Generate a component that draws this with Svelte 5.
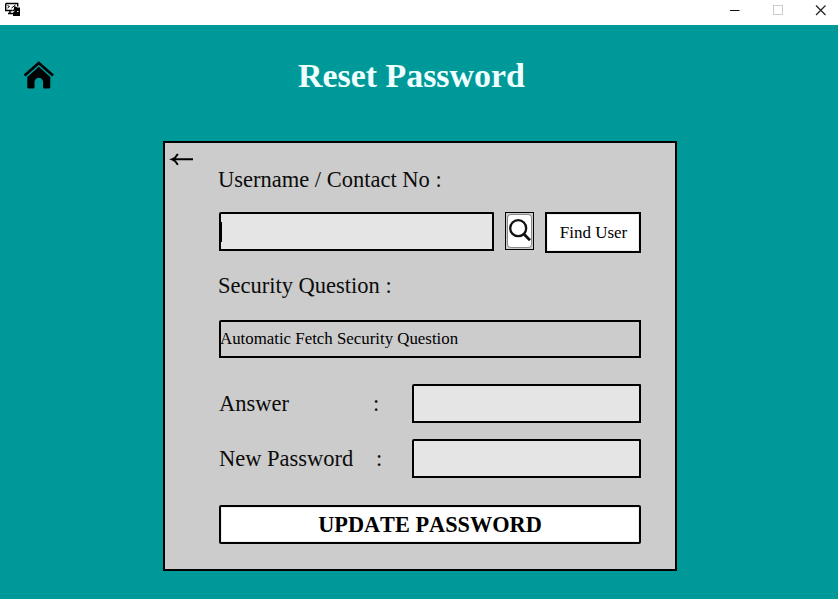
<script>
  let username = $state('');
  let answer = $state('');
  let password = $state('');
</script>

<div class="window">
  <header class="titlebar">
    <svg class="app-icon" width="16" height="16" viewBox="0 0 16 16" aria-hidden="true">
      <path d="M.7 1.500h12v3M.7 1.500v7h7M3 11.500h5M5 8.500v3" fill="none" stroke="#000" stroke-width="1.400" />
      <path d="M2.500 3.500l2 1-2 1.500M10.500 3l-4 3" fill="none" stroke="#000" stroke-width="1" />
      <path d="M9 4.500h2l1 1h3V14H8V7.500h1z" fill="#000" />
      <path d="M7.500 10.500l2-1.500M12 9.500h1.500" stroke="#fff" stroke-width="1" />
    </svg>
    <div class="controls">
      <svg width="11" height="11" viewBox="0 0 11 11"><path d="M1 5.500h9.500" stroke="#111" stroke-width="1" /></svg>
      <svg width="11" height="11" viewBox="0 0 11 11"><rect x="1.500" y=".5" width="9" height="9" fill="none" stroke="#ccc" /></svg>
      <svg width="11" height="11" viewBox="0 0 11 11"><path d="M1 .5l9.500 9.500M10.500 .5l-9.500 9.500" stroke="#222" stroke-width="1.200" /></svg>
    </div>
  </header>

  <div class="heading">
    <svg class="home" width="32" height="30" viewBox="0 0 32 30" aria-label="Home">
      <path d="M1.600 14.400L15.800 2.100l14.200 12.300" fill="none" stroke="#000" stroke-width="2.700" />
      <path d="M15.800 5.800L4.300 16V26q0 1.500 1.500 1.500h4.500q1.200 0 1.200-1.200v-5a4.300 4.500 0 0 1 8.600 0v5q0 1.200 1.200 1.200h4.500q1.500 0 1.500-1.500V16z" fill="#000" />
    </svg>
    <h1>Reset Password</h1>
  </div>

  <main class="panel">
    <svg class="back" width="26" height="16" viewBox="0 0 26 16" aria-label="Back">
      <path d="M24 8.300H3.500M8.800 2.800Q6.700 7 3 8.300q3.700 1.300 5.800 5.500" fill="none" stroke="#000" stroke-width="1.900" />
    </svg>
    <label class="label user-label" for="user">Username / Contact No :</label>
    <div class="lookup">
      <div class="field user"><span class="caret"></span><input id="user" bind:value={username} /></div>
      <button class="search" aria-label="Search">
        <svg width="25" height="34" viewBox="0 0 25 34">
          <circle cx="11.200" cy="14.200" r="8" fill="none" stroke="#111" stroke-width="2.300" />
          <path d="M16.800 20l6.200 6.200" stroke="#111" stroke-width="2.700" />
        </svg>
      </button>
      <button class="find">Find User</button>
    </div>
    <div class="label question-label">Security Question :</div>
    <div class="question"><span>Automatic Fetch Security Question</span></div>
    <div class="row answer">
      <label class="label" for="answer">Answer</label><span class="label colon">:</span>
      <div class="field"><input id="answer" bind:value={answer} /></div>
    </div>
    <div class="row password">
      <label class="label" for="password">New Password</label><span class="label colon">:</span>
      <div class="field"><input id="password" type="password" bind:value={password} /></div>
    </div>
    <button class="update">UPDATE PASSWORD</button>
  </main>
</div>

<style>
  :global(body) { margin: 0; overflow: hidden; }
  .window, .window * { box-sizing: border-box; }
  .window {
    width: 838px; height: 599px; background: #099; color: #000;
    font-family: "Liberation Serif", "Times New Roman", serif;
    font-kerning: none; display: flex; flex-direction: column;
  }
  svg { display: block; flex: none; }
  .titlebar {
    height: 25px; background: #fff; display: flex; flex: none;
    justify-content: space-between; align-items: flex-start; padding: 2px 12px 0 5px;
  }
  .controls { display: flex; gap: 32px; padding-top: 3px; }
  .heading { height: 116px; display: flex; padding: 35px 0 0 23px; flex: none; }
  .home { margin-top: 1px; }
  h1 { margin: -4px 0 0 243px; font-size: 33.900px; line-height: 40px; font-weight: bold; color: #f0ffff; white-space: nowrap; }
  .panel {
    width: 514px; height: 430px; margin-left: 163px; flex: none;
    background: #ccc; border: 2px solid #000; padding: 8px 34px 0 54px;
    display: flex; flex-direction: column;
  }
  .back { margin-left: -50px; }
  .label { font-size: 22.500px; line-height: 26px; color: #0b0b0b; white-space: pre; }
  .user-label, .question-label { margin-left: -1px; }
  .lookup { display: flex; margin-top: 19px; height: 41px; align-items: flex-start; }
  .field { height: 39px; border: 2px solid #000; border-radius: 2px 1px 0 0; background: #e5e5e5; display: flex; align-items: center; }
  .field input { width: 100%; min-width: 0; border: 0; outline: 0; background: none; padding: 0 2px; font: inherit; font-size: 17px; }
  .user { width: 275px; }
  .caret { width: 1px; height: 20px; background: #000; flex: none; }
  button { font-family: inherit; font-kerning: none; color: #000; padding: 0; background: #fff; }
  .search { width: 29px; height: 38px; margin-left: 11px; border: 1px solid #000; background: #ccc; display: flex; padding: 1px; }
  .search svg { background: #fff; border-radius: 4px; box-shadow: inset 0 0 0 1px #888; }
  .find { width: 96px; height: 41px; margin-left: 11px; border: 2px solid #000; font-size: 17px; padding-left: 1px; box-shadow: inset 0 0 0 1px #eee; }
  .question-label { margin-top: 20px; }
  .question { height: 38px; margin-top: 21px; border: 2px solid #000; font-size: 16.850px; line-height: 34px; border-radius: 2px 0 0 0; }
  .question span { margin-left: -1px; }
  .row { display: flex; align-items: center; }
  .answer { margin-top: 26px; }
  .password { margin-top: 16px; }
  .row label { width: 154px; }
  .password label { width: 157px; }
  .row .field { width: 229px; margin-left: auto; }
  .update { height: 39px; margin-top: 27px; border: 2px solid #000; border-radius: 2px; font-size: 22.300px; font-weight: bold; flex: none; box-shadow: inset 0 0 0 1px #eee; }
</style>
